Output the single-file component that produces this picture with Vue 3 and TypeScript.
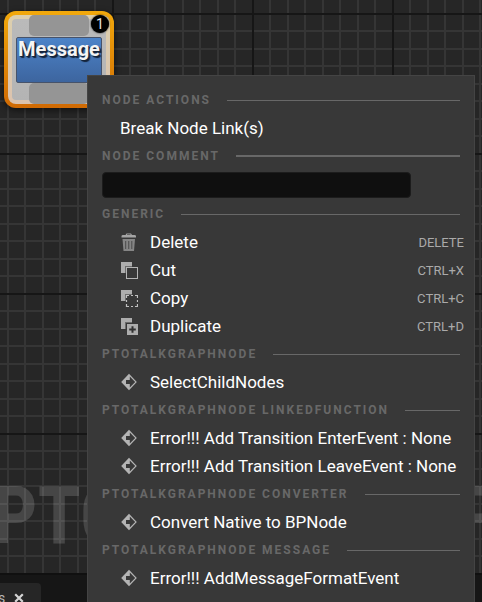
<script setup lang="ts">
import { ref } from 'vue'

type IconName = 'trash' | 'cut' | 'copy' | 'duplicate' | 'event'

interface MenuItem {
  label: string
  icon?: IconName
  shortcut?: string
}

interface MenuSection {
  title: string
  comment?: boolean
  items: MenuItem[]
}

const comment = ref('')

const sections: MenuSection[] = [
  { title: 'NODE ACTIONS', items: [{ label: 'Break Node Link(s)' }] },
  { title: 'NODE COMMENT', comment: true, items: [] },
  {
    title: 'GENERIC',
    items: [
      { label: 'Delete', icon: 'trash', shortcut: 'DELETE' },
      { label: 'Cut', icon: 'cut', shortcut: 'CTRL+X' },
      { label: 'Copy', icon: 'copy', shortcut: 'CTRL+C' },
      { label: 'Duplicate', icon: 'duplicate', shortcut: 'CTRL+D' },
    ],
  },
  { title: 'PTOTALKGRAPHNODE', items: [{ label: 'SelectChildNodes', icon: 'event' }] },
  {
    title: 'PTOTALKGRAPHNODE LINKEDFUNCTION',
    items: [
      { label: 'Error!!! Add Transition EnterEvent : None', icon: 'event' },
      { label: 'Error!!! Add Transition LeaveEvent : None', icon: 'event' },
    ],
  },
  { title: 'PTOTALKGRAPHNODE CONVERTER', items: [{ label: 'Convert Native to BPNode', icon: 'event' }] },
  { title: 'PTOTALKGRAPHNODE MESSAGE', items: [{ label: 'Error!!! AddMessageFormatEvent', icon: 'event' }] },
]
</script>

<template>
  <div class="editor">
    <main class="graph">
      <div class="watermark">
        <span>PTO</span>
        <span>P</span>
      </div>
      <div class="node">
        <span class="pin pin-top"></span>
        <div class="node-title">Message</div>
        <span class="pin pin-bottom"></span>
        <span class="badge">1</span>
      </div>
    </main>

    <footer class="tabs">
      <div class="tab">
        <span>s</span>
        <button class="close" type="button" aria-label="Close tab">
          <svg width="10" height="10" viewBox="0 0 10 10">
            <path d="M1.2 1.2 8.8 8.8M8.8 1.2 1.2 8.8" stroke="#d4d4d4" stroke-width="2.2" />
          </svg>
        </button>
      </div>
    </footer>

    <div class="menu">
      <section v-for="section in sections" :key="section.title">
        <h2 class="heading" :class="{ strong: section.comment }">{{ section.title }}</h2>
        <div v-if="section.comment" class="comment">
          <input v-model="comment" type="text" aria-label="Node comment" />
        </div>
        <button v-for="item in section.items" :key="item.label" class="item" type="button">
          <svg v-if="item.icon" class="icon" width="18" height="18" viewBox="0 0 18 18" fill="none">
            <g v-if="item.icon === 'trash'">
              <path d="M1.5 4.5V3.2Q1.5 2 3 2H5.5L6.5 .5H11L12 2H14.5Q16 2 16 3.2V4.5Z" fill="#a5a5a5" />
              <path d="M7 2H10.5V1.4H7Z" fill="#383838" />
              <path d="M2.5 6H15L14 18H3.5Z" fill="#858585" />
              <path d="M5.7 8V16M8.75 8V16M11.8 8V16" stroke="#4a4a4a" stroke-width="1" />
            </g>
            <g v-else-if="item.icon === 'event'">
              <path d="M9 .8 16.8 9 9 17.2 1.2 9Z" fill="#b4b4b4" />
              <path d="M9.8 3.4 15.2 9 9.8 14.6V11H6V7H9.800Z" fill="#383838" />
            </g>
            <g v-else>
              <path d="M1 1H12V5H5V12H1Z" fill="#adadad" />
              <path d="M5 5H12V6H6V12H5Z" fill="#6c6c6c" />
              <rect v-if="item.icon === 'cut'" x="6.5" y="6.5" width="11" height="11" stroke="#b4b4b4" />
              <path
                v-if="item.icon === 'copy'"
                d="M6.5 9V6.5H9M11 6.5H13M15 6.5H17.5V9M17.5 11V13M17.5 15V17.5H15M13 17.5H11M9 17.5H6.5V15M6.5 13V11"
                stroke="#c0c0c0"
                stroke-width="1.2"
              />
              <template v-if="item.icon === 'duplicate'">
                <rect x="7" y="7" width="11" height="11" fill="#adadad" />
                <path d="M12.5 9.2V15.8M9.2 12.5H15.8" stroke="#333333" stroke-width="2" />
              </template>
            </g>
          </svg>
          <span class="label">{{ item.label }}</span>
          <kbd v-if="item.shortcut" class="shortcut">{{ item.shortcut }}</kbd>
        </button>
      </section>
    </div>
  </div>
</template>

<style>
body {
  margin: 0;
  background: #151515;
}
</style>

<style scoped>
.editor {
  position: relative;
  display: flex;
  flex-direction: column;
  height: 100vh;
  overflow: hidden;
  font-family: Roboto, 'Liberation Sans', sans-serif;
}

.graph {
  position: relative;
  flex: 1;
  overflow: hidden;
  background-color: #262626;
  background-image:
    linear-gradient(#161616 2px, transparent 2px),
    linear-gradient(90deg, #161616 2px, transparent 2px),
    linear-gradient(#353535 2px, transparent 2px, transparent 17px, #353535 17px, #353535 19px, transparent 19px),
    linear-gradient(90deg, #353535 2px, transparent 2px, transparent 17px, #353535 17px, #353535 19px, transparent 19px);
  background-size: 140px 140px, 140px 140px, 35px 35px, 35px 35px;
  background-position: 0 13px, 112px 0, 0 13px, 7px 0;
}

.watermark {
  position: absolute;
  left: -8px;
  right: -20px;
  bottom: 10px;
  display: flex;
  justify-content: space-between;
  font-family: 'Roboto Condensed', 'Liberation Sans Narrow', Roboto, sans-serif;
  font-size: 80px;
  font-weight: 700;
  line-height: 94px;
  color: rgba(255, 255, 255, 0.15);
  white-space: nowrap;
}

.node {
  position: absolute;
  top: 11px;
  left: 4px;
  box-sizing: border-box;
  width: 110px;
  height: 97px;
  padding: 4px;
  display: flex;
  flex-direction: column;
  align-items: center;
  justify-content: space-between;
  border: 4px solid transparent;
  border-radius: 12px;
  background:
    linear-gradient(#bababa, #b4b4b4) content-box,
    linear-gradient(#dccfae, #dcc3ae) padding-box,
    linear-gradient(#f2a90c, #d06a04) border-box;
  box-shadow: 0 2px 6px rgba(0, 0, 0, 0.6);
}

.pin {
  width: 60px;
  height: 21px;
  border-radius: 5px;
  background: #959595;
}

.pin-top {
  margin-top: -4px;
}

.pin-bottom {
  margin-bottom: -4px;
}

.node-title {
  align-self: stretch;
  height: 44px;
  margin: 0 4px;
  border: 1px solid #47536a;
  border-radius: 2px;
  background: linear-gradient(#4c83c8, #3d659f);
  color: #f4f4f4;
  font-size: 20px;
  font-weight: 700;
  line-height: 22px;
  text-align: center;
  text-shadow: 1px 1px 0 #14233a, 2px 2px 1px #14233a;
}

.badge {
  position: absolute;
  top: 0;
  right: 1px;
  width: 18px;
  height: 18px;
  border-radius: 50%;
  background: #000;
  box-shadow: 0 0 2px #000;
  color: #e8e8e8;
  font-size: 14px;
  line-height: 18px;
  text-align: center;
}

.tabs {
  display: flex;
  align-items: flex-end;
  height: 27px;
  border-top: 2px solid #101010;
  background: #161616;
}

.tab {
  display: flex;
  align-items: center;
  gap: 9px;
  height: 19px;
  padding-right: 17px;
  border-top-right-radius: 4px;
  background: #262626;
  color: #b8b8b8;
  font-size: 14px;
}

.close {
  display: flex;
  margin-top: 10px;
  padding: 0;
  border: 0;
  background: none;
}

.tab span {
  margin-top: 10px;
  margin-left: -2px;
}

.menu {
  position: absolute;
  top: 75px;
  left: 87px;
  right: 7px;
  box-sizing: border-box;
  padding: 10px 14px;
  border: 1px solid #444444;
  background: #383838;
}

.heading {
  display: flex;
  align-items: center;
  gap: 16px;
  height: 28px;
  margin: 0;
  color: #686868;
  font-size: 12px;
  font-weight: 700;
  letter-spacing: 2px;
  line-height: 28px;
}

.heading::after {
  content: '';
  flex: 1;
  height: 1px;
  background: #686868;
}

.heading.strong::after {
  height: 2px;
}

.comment {
  display: flex;
  height: 30px;
  padding: 2px 49px 2px 0;
  box-sizing: border-box;
}

.comment input {
  flex: 1;
  min-width: 0;
  box-sizing: border-box;
  padding: 0 8px;
  border: 1px solid #1c1c1c;
  border-radius: 4px;
  background: #0f0f0f;
  color: #ffffff;
  font: 16px Roboto, sans-serif;
}

.item {
  display: flex;
  align-items: center;
  width: 100%;
  height: 28px;
  padding: 0 0 0 18px;
  border: 0;
  background: none;
  color: #ffffff;
  font-family: inherit;
  font-size: 17px;
  text-align: left;
  white-space: nowrap;
}

.icon {
  flex: none;
  margin-right: 12px;
}

.label {
  flex: 1;
}

.shortcut {
  margin-right: -4px;
  color: #aaaaaa;
  font-family: inherit;
  font-size: 13px;
}
</style>
